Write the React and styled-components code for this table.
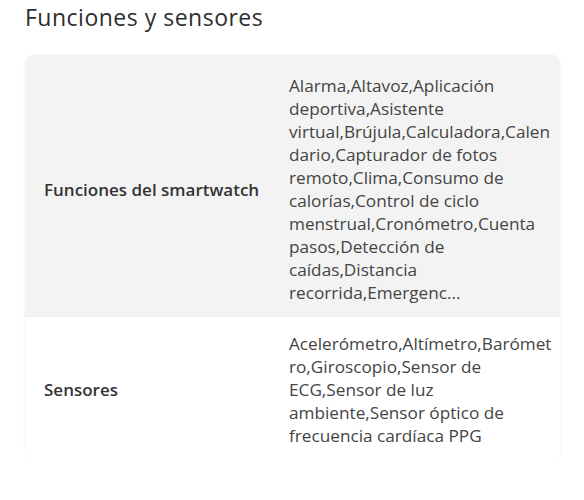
import styled, { createGlobalStyle } from 'styled-components';

const GlobalStyle = createGlobalStyle`
  body {
    margin: 0;
    background: #ffffff;
    font-family: 'Open Sans', 'Liberation Sans', sans-serif;
  }
`;

const specs = [
  {
    label: 'Funciones del smartwatch',
    value:
      'Alarma,Altavoz,Aplicación deportiva,Asistente virtual,Brújula,Calculadora,Calendario,Capturador de fotos remoto,Clima,Consumo de calorías,Control de ciclo menstrual,Cronómetro,Cuenta pasos,Detección de caídas,Distancia recorrida,Emergenc...',
    shaded: true,
  },
  {
    label: 'Sensores',
    value:
      'Acelerómetro,Altímetro,Barómetro,Giroscopio,Sensor de ECG,Sensor de luz ambiente,Sensor óptico de frecuencia cardíaca PPG',
    shaded: false,
  },
];

export default function App() {
  return (
    <Page>
      <GlobalStyle />
      <Title>Funciones y sensores</Title>
      <Card>
        {specs.map(s => (
          <Row key={s.label} $shaded={s.shaded}>
            <Label>{s.label}</Label>
            <Value>{s.value}</Value>
          </Row>
        ))}
      </Card>
    </Page>
  );
}

const Page = styled.div`
  padding: 1px 24px 0 25px;
  width: 584px;
  box-sizing: border-box;
`;

const Title = styled.h2`
  margin: 0 0 21px;
  font-size: 23px;
  font-weight: 500;
  letter-spacing: 0.5px;
  line-height: 33px;
  color: #2e2e2e;
`;

const Card = styled.div`
  width: 535px;
  border-radius: 8px;
  overflow: hidden;
  box-shadow: 0 0 3px rgba(0, 0, 0, 0.06);
`;

const Row = styled.div`
  display: grid;
  grid-template-columns: 264px 1fr;
  align-items: center;
  padding: 19px 0 12px;
  background: ${p => (p.$shaded ? '#f3f3f3' : '#ffffff')};
  border-bottom: 1px solid #ececec;
  &:last-child {
    border-bottom: none;
    padding: 15px 0 14px;
  }
`;

const Label = styled.div`
  padding-left: 19px;
  font-size: 17px;
  font-weight: 600;
  color: #333;
`;

const Value = styled.div`
  padding-right: 4px;
  font-size: 17.2px;
  line-height: 23px;
  color: #444;
  overflow-wrap: anywhere;
`;
